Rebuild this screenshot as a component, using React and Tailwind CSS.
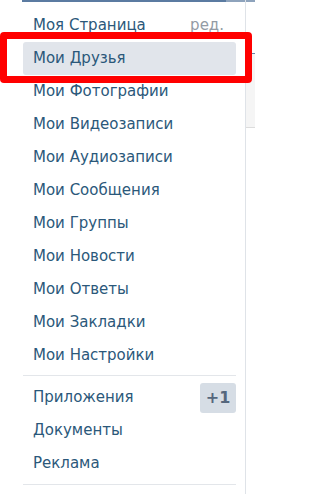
import React from "react";

const items1 = [
  "Мои Друзья",
  "Мои Фотографии",
  "Мои Видеозаписи",
  "Мои Аудиозаписи",
  "Мои Сообщения",
  "Мои Группы",
  "Мои Новости",
  "Мои Ответы",
  "Мои Закладки",
  "Мои Настройки",
];

function Row({ children, active, right }) {
  return (
    <div
      className={
        "h-[33px] flex items-center justify-between pl-[10px] rounded-[3px] " +
        (active ? "bg-[#e1e5eb]" : "")
      }
    >
      <span className="text-[#2b587a]">{children}</span>
      {right}
    </div>
  );
}

export default function App() {
  return (
    <div
      className="relative w-[255px] h-[494px] overflow-hidden bg-white flex"
      style={{ fontFamily: '"DejaVu Sans", Verdana, sans-serif' }}
    >
      <div className="w-[245px] shrink-0 flex flex-col text-[15px] leading-none">
        <div className="flex h-[2px] ml-[22px]">
          <div className="w-[204px] bg-[#5b7ba1]" />
          <div className="flex-1 bg-[#8ea3bc]" />
        </div>
        <div className="w-[213px] ml-[23px] mt-[7px] flex flex-col">
          <Row right={<span className="text-[#939ba5] mr-[12px]">ред.</span>}>
            Моя Страница
          </Row>
          {items1.map((t, i) => (
            <Row key={t} active={i === 0}>
              {t}
            </Row>
          ))}
          <div className="h-px bg-[#e3e6ea] mt-[3px] mb-[5px]" />
          <Row
            right={
              <span className="h-[30px] w-[36px] flex items-center justify-center rounded-[3px] bg-[#d6dde5] text-[#55677d] font-bold text-[16px]">
                +1
              </span>
            }
          >
            Приложения
          </Row>
          <Row>Документы</Row>
          <Row>Реклама</Row>
          <div className="h-px bg-[#e3e6ea] mt-[4px]" />
        </div>
      </div>
      <div className="w-px shrink-0 bg-[#dfe3e8]" />
      <div className="w-[9px] shrink-0 flex flex-col">
        <div className="h-[2px] bg-[#8ea3bc]" />
        <div className="h-[51px]" />
        <div className="h-px bg-[#6584a8]" />
        <div className="h-[73px] bg-[#f5f5f5]" />
        <div className="h-px bg-[#dcdcdc]" />
      </div>
      <div className="absolute left-0 top-[32px] w-[252px] h-[51px] border-[7px] border-[#ff0000] rounded-[4px] pointer-events-none" />
    </div>
  );
}
